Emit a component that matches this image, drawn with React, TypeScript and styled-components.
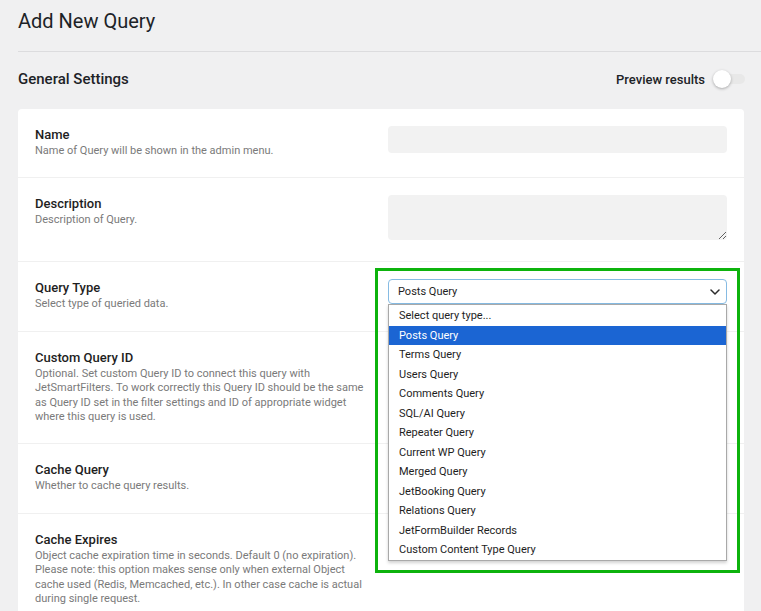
import React from "react";
import styled, { createGlobalStyle } from "styled-components";

const GlobalStyle = createGlobalStyle`
  html, body {
    margin: 0;
    padding: 0;
    background: #f0f0f1;
    font-family: Roboto, "Liberation Sans", Arial, sans-serif;
    color: #1e1e1e;
  }
`;

const queryTypes = [
  "Select query type...",
  "Posts Query",
  "Terms Query",
  "Users Query",
  "Comments Query",
  "SQL/AI Query",
  "Repeater Query",
  "Current WP Query",
  "Merged Query",
  "JetBooking Query",
  "Relations Query",
  "JetFormBuilder Records",
  "Custom Content Type Query",
];

interface FieldProps {
  label: string;
  description: React.ReactNode;
  children?: React.ReactNode;
}

const Field: React.FC<FieldProps> = ({ label, description, children }) => (
  <Row>
    <LabelCol>
      <Label>{label}</Label>
      <Help>{description}</Help>
    </LabelCol>
    <ControlCol>{children}</ControlCol>
  </Row>
);

const App: React.FC = () => {
  const [preview, setPreview] = React.useState(false);
  const [selected] = React.useState("Posts Query");

  return (
    <Page>
      <GlobalStyle />
      <Header>
        <Title>Add New Query</Title>
      </Header>

      <SectionHead>
        <SectionTitle>General Settings</SectionTitle>
        <PreviewToggle onClick={() => setPreview(!preview)}>
          Preview results
          <Switch $on={preview}>
            <Knob $on={preview} />
          </Switch>
        </PreviewToggle>
      </SectionHead>

      <Card>
        <Field label="Name" description="Name of Query will be shown in the admin menu.">
          <TextInput />
        </Field>
        <Field label="Description" description="Description of Query.">
          <TextArea />
        </Field>
        <Field label="Query Type" description="Select type of queried data.">
          <SelectWrap>
            <Highlight />
            <SelectBox>
              <span>{selected}</span>
              <svg width="10" height="6" viewBox="0 0 10 6">
                <path
                  d="M1 1 L5 5 L9 1"
                  fill="none"
                  stroke="#2c2c2c"
                  strokeWidth="1.5"
                  strokeLinecap="round"
                  strokeLinejoin="round"
                />
              </svg>
            </SelectBox>
            <Options>
              {queryTypes.map((item) => (
                <Option key={item} $active={item === selected}>
                  {item}
                </Option>
              ))}
            </Options>
          </SelectWrap>
        </Field>
        <Field
          label="Custom Query ID"
          description="Optional. Set custom Query ID to connect this query with JetSmartFilters. To work correctly this Query ID should be the same as Query ID set in the filter settings and ID of appropriate widget where this query is used."
        >
          <TextInput />
        </Field>
        <Field label="Cache Query" description="Whether to cache query results." />
        <Field
          label="Cache Expires"
          description="Object cache expiration time in seconds. Default 0 (no expiration). Please note: this option makes sense only when external Object cache used (Redis, Memcached, etc.). In other case cache is actual during single request."
        >
          <TextInput />
        </Field>
      </Card>
    </Page>
  );
};

export default App;

const Page = styled.div`
  padding-left: 18px;
  overflow: hidden;
`;

const Header = styled.div`
  padding: 9px 0 18px;
  border-bottom: 1px solid #dcdcde;
`;

const Title = styled.h1`
  margin: 0;
  font-size: 20px;
  line-height: 24px;
  font-weight: 400;
  color: #1d2327;
`;

const SectionHead = styled.div`
  display: flex;
  align-items: center;
  justify-content: space-between;
  height: 54px;
  padding-right: 16px;
  margin-bottom: 3px;
`;

const SectionTitle = styled.h2`
  margin: 0;
  font-size: 15px;
  font-weight: 500;
  color: #1d2327;
`;

const PreviewToggle = styled.label`
  display: flex;
  align-items: center;
  gap: 8px;
  font-size: 13px;
  font-weight: 500;
  color: #1d2327;
  cursor: pointer;
`;

const Switch = styled.span<{ $on: boolean }>`
  position: relative;
  width: 32px;
  height: 10px;
  border-radius: 5px;
  background: ${({ $on }) => ($on ? "#7fb0e6" : "#e8e8e8")};
`;

const Knob = styled.span<{ $on: boolean }>`
  position: absolute;
  top: -4px;
  left: ${({ $on }) => ($on ? "14px" : "0")};
  width: 18px;
  height: 18px;
  border-radius: 50%;
  background: #fff;
  box-shadow: 0 1px 3px rgba(0, 0, 0, 0.3);
`;

const Card = styled.div`
  margin-right: 17px;
  background: #fff;
  border-radius: 4px;
`;

const Row = styled.div`
  display: grid;
  grid-template-columns: 1fr 339px;
  column-gap: 18px;
  padding: 16px 17px 19px;

  & + & {
    border-top: 1px solid #f0f0f0;
  }
`;

const LabelCol = styled.div`
  display: flex;
  flex-direction: column;
`;

const Label = styled.div`
  padding-top: 1px;
  font-size: 13px;
  line-height: 17px;
  font-weight: 500;
  color: #1e1e1e;
`;

const Help = styled.div`
  margin-top: 1px;
  font-size: 11px;
  line-height: 14.4px;
  color: #7a7a7a;
`;

const ControlCol = styled.div`
  padding: 1px 0 2px;
`;

const TextInput = styled.input`
  display: block;
  box-sizing: border-box;
  width: 100%;
  height: 27px;
  border: 0;
  border-radius: 4px;
  background: #f2f2f2;
  outline: none;
`;

const TextArea = styled.textarea`
  display: block;
  box-sizing: border-box;
  width: 100%;
  height: 45px;
  border: 0;
  border-radius: 4px;
  background: #f2f2f2;
  outline: none;
`;

const SelectWrap = styled.div`
  position: relative;
`;

const SelectBox = styled.div`
  display: flex;
  align-items: center;
  justify-content: space-between;
  box-sizing: border-box;
  height: 25px;
  padding: 0 6px 0 9px;
  border: 1px solid #86bbe3;
  border-radius: 4px;
  background: #fff;
  font-size: 11px;
  color: #1e1e1e;
`;

const Options = styled.ul`
  position: absolute;
  z-index: 2;
  top: 100%;
  left: 0;
  right: 0;
  margin: 0;
  padding: 1px 0 0;
  list-style: none;
  background: #fff;
  border: 1px solid #a9a9a9;
  box-shadow: 0 2px 3px rgba(0, 0, 0, 0.18);
`;

const Option = styled.li<{ $active: boolean }>`
  height: 19.5px;
  line-height: 19.5px;
  padding-left: 10px;
  font-size: 11px;
  color: ${({ $active }) => ($active ? "#fff" : "#1e1e1e")};
  background: ${({ $active }) => ($active ? "#1b65d3" : "transparent")};
`;

const Highlight = styled.div`
  position: absolute;
  z-index: 3;
  top: -11px;
  left: -13px;
  right: -13px;
  height: 305px;
  border: 3px solid #0db30d;
  box-sizing: border-box;
  pointer-events: none;
`;
